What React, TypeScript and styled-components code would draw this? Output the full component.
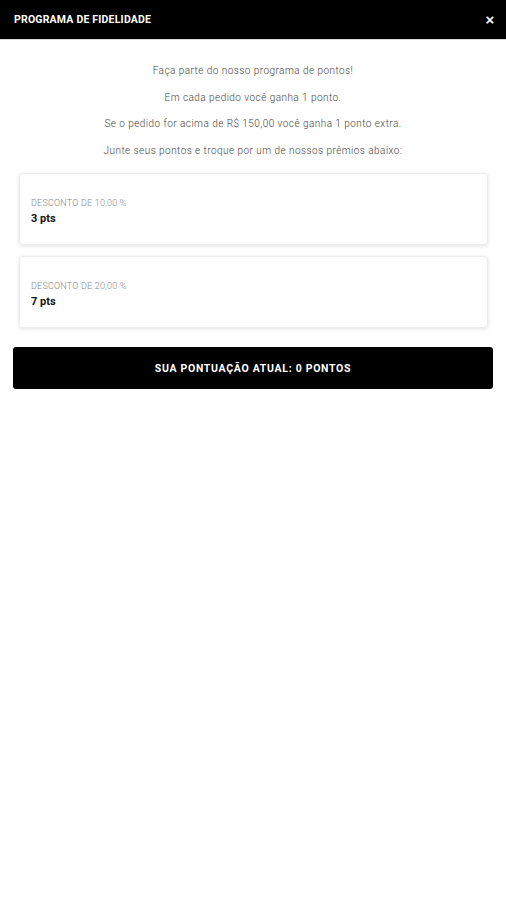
import styled, { createGlobalStyle } from "styled-components";

const GlobalStyle = createGlobalStyle`
    body {
        margin: 0;
        background: #ffffff;
        font-family: Roboto, "Liberation Sans", sans-serif;
    }
`;

const Page = styled.div`
    width: 506px;
    min-height: 900px;
    background: #fff;
`;

const Header = styled.header`
    height: 39px;
    background: #000;
    border-bottom: 1px solid #d8d8d8;
    display: flex;
    align-items: center;
    justify-content: space-between;
    padding: 0 10px 0 14px;
`;

const Title = styled.h1`
    margin: 0;
    font-size: 10.5px;
    font-weight: 700;
    color: #fff;
    letter-spacing: 0.2px;
`;

const CloseBtn = styled.button`
    border: none;
    background: none;
    color: #fff;
    font-size: 15px;
    font-weight: 700;
    padding: 0;
    width: 12px;
    line-height: 1;
    cursor: pointer;
`;

const Content = styled.div`
    padding: 24px 13px 0 13px;
`;

const Intro = styled.div`
    display: flex;
    flex-direction: column;
    align-items: center;
    gap: 12px;
    margin-bottom: 15px;
`;

const IntroLine = styled.p`
    margin: 0;
    font-size: 10px;
    font-weight: 300;
    line-height: 14.5px;
    letter-spacing: 0.45px;
    color: #444;
`;

const PrizeList = styled.ul`
    list-style: none;
    margin: 0;
    padding: 0 5px 0 6px;
    display: flex;
    flex-direction: column;
    gap: 11px;
`;

const Prize = styled.li`
    height: 72px;
    box-sizing: border-box;
    border: 1px solid #ececec;
    border-radius: 4px;
    box-shadow: 0 1px 4px rgba(0, 0, 0, 0.12);
    padding: 23px 11px 0;
    display: flex;
    flex-direction: column;
`;

const PrizeLabel = styled.span`
    font-size: 9px;
    font-weight: 300;
    color: #888;
    line-height: 13px;
    letter-spacing: 0.2px;
`;

const PrizePoints = styled.span`
    font-size: 11px;
    font-weight: 700;
    color: #111;
    line-height: 18px;
`;

const ScoreBar = styled.div`
    margin-top: 19px;
    height: 42px;
    background: #000;
    border-radius: 3px;
    display: flex;
    align-items: center;
    justify-content: center;
    color: #fff;
    font-size: 10.5px;
    font-weight: 700;
    letter-spacing: 0.7px;
`;

const lines = [
    "Faça parte do nosso programa de pontos!",
    "Em cada pedido você ganha 1 ponto.",
    "Se o pedido for acima de R$ 150,00 você ganha 1 ponto extra.",
    "Junte seus pontos e troque por um de nossos prêmios abaixo:"
];

const prizes = [
    { id: 1, label: "DESCONTO DE 10,00 %", points: 3 },
    { id: 2, label: "DESCONTO DE 20,00 %", points: 7 }
];

function App() {
    return (
        <Page>
            <GlobalStyle />
            <Header>
                <Title>PROGRAMA DE FIDELIDADE</Title>
                <CloseBtn>×</CloseBtn>
            </Header>
            <Content>
                <Intro>
                    {lines.map(line => (
                        <IntroLine key={line}>{line}</IntroLine>
                    ))}
                </Intro>
                <PrizeList>
                    {prizes.map(prize => (
                        <Prize key={prize.id}>
                            <PrizeLabel>{prize.label}</PrizeLabel>
                            <PrizePoints>{prize.points} pts</PrizePoints>
                        </Prize>
                    ))}
                </PrizeList>
                <ScoreBar>SUA PONTUAÇÃO ATUAL: 0 PONTOS</ScoreBar>
            </Content>
        </Page>
    );
}

export default App;
